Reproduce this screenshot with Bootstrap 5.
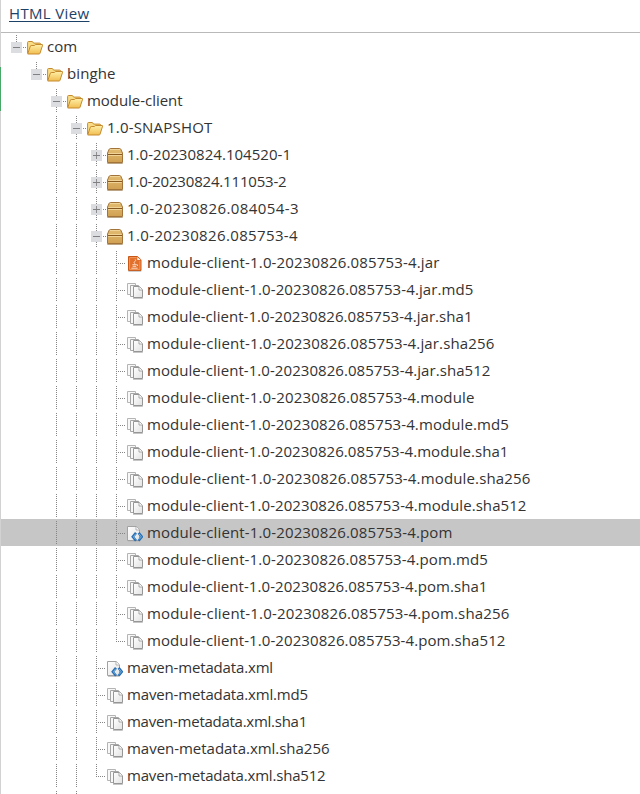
<!DOCTYPE html>
<html lang="en">
<head>
<meta charset="utf-8">
<meta name="viewport" content="width=device-width, initial-scale=1">
<title>HTML View</title>
<link href="https://cdn.jsdelivr.net/npm/bootstrap@5.3.0/dist/css/bootstrap.min.css" rel="stylesheet">
<style>
body{font-family:"Open Sans","Noto Sans",sans-serif;color:#333;font-size:15px;height:794px}
.edge{width:1px;background:linear-gradient(#d2d2d2 0 67px,#48a868 67px 111px,#d2d2d2 111px)}
.view-head{height:33px;border-bottom:1px solid #b9b9b9;padding:0 8px;line-height:27px}
.view-head a{color:#1d4268;text-underline-offset:2px;text-decoration-thickness:1px}
.tree-row{height:27px;padding-left:5px;line-height:27px;white-space:nowrap}
.tree-row.selected{background:#c6c6c6}
.tree-row svg{flex:none;display:block}
.node-icon{margin:0 4px 0 1px}
</style>
<script src="https://cdn.jsdelivr.net/npm/bootstrap@5.3.0/dist/js/bootstrap.bundle.min.js"></script>
</head>
<body class="bg-white overflow-hidden">
<svg width="0" height="0" class="position-absolute">
<defs>
<linearGradient id="gold" x2="0" y2="1"><stop stop-color="#fff0a8"/><stop offset="1" stop-color="#f0bd50"/></linearGradient>
<linearGradient id="wood" x2="0" y2="1"><stop stop-color="#e3bd72"/><stop offset="1" stop-color="#d0a052"/></linearGradient>
<linearGradient id="paper" x2="1" y2="1"><stop stop-color="#fff"/><stop offset="1" stop-color="#e2e2e2"/></linearGradient>
<symbol id="folder" viewBox="0 0 16 27">
<path d="M.6 20V9.5q0-1 1-1h3.8l1.2 1.6h6q1 0 1 1v2" fill="#f9dc86" stroke="#c68a2e"/>
<path d="M.7 20.9 3.4 13q.2-.5.8-.5h3.2l1.2-1h6.5q.7 0 .5.7L13 20.3q-.2.7-.9.7H.7z" fill="url(#gold)" stroke="#c68a2e"/>
</symbol>
<symbol id="box" viewBox="0 0 16 27">
<path d="M.5 12 2.2 8.2q.4-.7 1.2-.7h9.2q.8 0 1.2.7L15.5 12v9.5H.5z" fill="url(#wood)" stroke="#a3743a"/>
<path d="M1 13.5h14" stroke="#87591f"/><path d="M1.2 14.5h13.6M3 8.5h10M1.2 12.5h13.6" stroke="#f0d497"/>
<path d="M.3 22.5h15.4" stroke="#a98e66" stroke-width=".8"/>
</symbol>
<symbol id="jar" viewBox="0 0 16 27">
<path d="M1.5 7.5h9l3.5 3.3v10.7H1.5z" fill="#e2702b" stroke="#c85816"/>
<path d="M10.3 8v3h3.4z" fill="#fff2e6"/>
<path d="M2.6 8.6h7M2.6 9v11.4h10.3v-8.5" stroke="#f4a26a" stroke-width=".8" fill="none"/>
<path d="M8.2 10.5q1 1-.4 2t.1 2.3M5.4 15.7h4.2q2 0 .6 1.3M5.6 17.3h3.6M4.4 19.2h6.2" stroke="#ffe8d8" stroke-width=".9" fill="none"/>
<path d="M1.3 22.4h13" stroke="#bbb" stroke-width=".8"/>
</symbol>
<symbol id="files" viewBox="0 0 16 27">
<path d="M.5 7.5h8v11h-8z" fill="#f8f8f8" stroke="#b4b4b4"/>
<path d="M3.5 9.5h8v11h-8z" fill="#f8f8f8" stroke="#a6a6a6"/>
<path d="M6.5 10.5h5.8l3.2 3.2v7.8h-9z" fill="url(#paper)" stroke="#969696"/>
<path d="M12 10.8v3.2h3.3" fill="#fff" stroke="#969696" stroke-width=".8"/>
<path d="M6 22.5h9.8" stroke="#c0c0c0" stroke-width=".9"/>
</symbol>
<symbol id="xml" viewBox="0 0 16 27">
<path d="M.5 7.5h8.7l3.3 3.3v10.7H.5z" fill="url(#paper)" stroke="#a2a2a2"/>
<path d="M9 7.7V11h3.3" fill="#fff" stroke="#a2a2a2" stroke-width=".8"/>
<path d="M1 22.5h11" stroke="#bbb" stroke-width=".8"/>
<path d="M9 13.9 5.8 17.8 9 21.7M11.6 13.9l3.2 3.9-3.2 3.9" fill="none" stroke="#2b6db0" stroke-width="2.5"/>
<path d="M8.7 14.9 6.3 17.8l2.4 2.7M12 14.9l2.4 2.9-2.4 2.7" fill="none" stroke="#70b9ee" stroke-width=".9"/>
</symbol>
</defs></svg>
<main class="d-flex h-100">
<div class="edge flex-shrink-0"></div>
<div class="flex-grow-1">
<header class="view-head"><a href="#" data-fit="80.5">HTML View</a></header>
<div id="tree"></div>
</div>
</main>
<script>
// Each entry: guide cells, icon, label, label width, selected.
// Cells: blank " ", line "|", leaf "t", last leaf "l", open "-", open and last "_", closed "+".
const snap='module-client-1.0-20230826.085753-4.';
const rows=[
['_','folder','com',30],[' _','folder','binghe',48.5],['  -','folder','module-client',95.5],['  |-','folder','1.0-SNAPSHOT',105.5],
['  ||+','box','1.0-20230824.104520-1',164],['  ||+','box','1.0-20230824.111053-2',159.5],['  ||+','box','1.0-20230826.084054-3',172],['  ||-','box','1.0-20230826.085753-4',171],
['  |||t','jar',snap+'jar',292.5],['  |||t','files',snap+'jar.md5',326.5],['  |||t','files',snap+'jar.sha1',325.5],['  |||t','files',snap+'jar.sha256',347.5],['  |||t','files',snap+'jar.sha512',343.5],
['  |||t','files',snap+'module',327.5],['  |||t','files',snap+'module.md5',362],['  |||t','files',snap+'module.sha1',361.5],['  |||t','files',snap+'module.sha256',383.5],['  |||t','files',snap+'module.sha512',379.5],
['  |||t','xml',snap+'pom',305.5,true],['  |||t','files',snap+'pom.md5',341],['  |||t','files',snap+'pom.sha1',340.5],['  |||t','files',snap+'pom.sha256',362.5],['  |||l','files',snap+'pom.sha512',358.5],
['  ||t','xml','maven-metadata.xml',146],['  ||t','files','maven-metadata.xml.md5',181],['  ||t','files','maven-metadata.xml.sha1',180],['  ||t','files','maven-metadata.xml.sha256',202.5],['  ||l','files','maven-metadata.xml.sha512',198.5],
['  ||','','',0]];
const dots='stroke="#858585" stroke-dasharray="1 1" fill="none"';
function cell(c){
  let s='';
  if('|t-+'.includes(c)) s+=`<path d="M10.5 2v23" ${dots}/>`;
  if('l_'.includes(c)) s+=`<path d="M10.5 2v13" ${dots}/>`;
  if('tl'.includes(c)) s+=`<path d="M12 14.5h7" ${dots}/>`;
  if('-_+'.includes(c)){
    s+=`<path d="M17 14.5h3" ${dots}/><path d="M5 9h11v11H5z" fill="#dcdde0"/><path d="M7 14.5h7" stroke="#808083"/>`;
    if(c==='+') s+='<path d="M10.5 11v3M10.5 15v3" stroke="#8e8e91"/>';
  }
  return `<svg width="20" height="27">${s}</svg>`;
}
document.getElementById('tree').innerHTML=rows.map(([g,i,t,w,on])=>
 `<div class="tree-row d-flex${on?' selected':''}">${[...g].map(cell).join('')}${i?`<svg class="node-icon" width="16" height="27"><use href="#${i}"/></svg>`:''}<span data-fit="${w}">${t}</span></div>`).join('');
document.querySelectorAll('[data-fit]').forEach(e=>{
  const n=e.textContent.length;
  if(n) e.style.letterSpacing=((+e.dataset.fit-e.getBoundingClientRect().width)/n).toFixed(3)+'px';
});
</script>
</body>
</html>
